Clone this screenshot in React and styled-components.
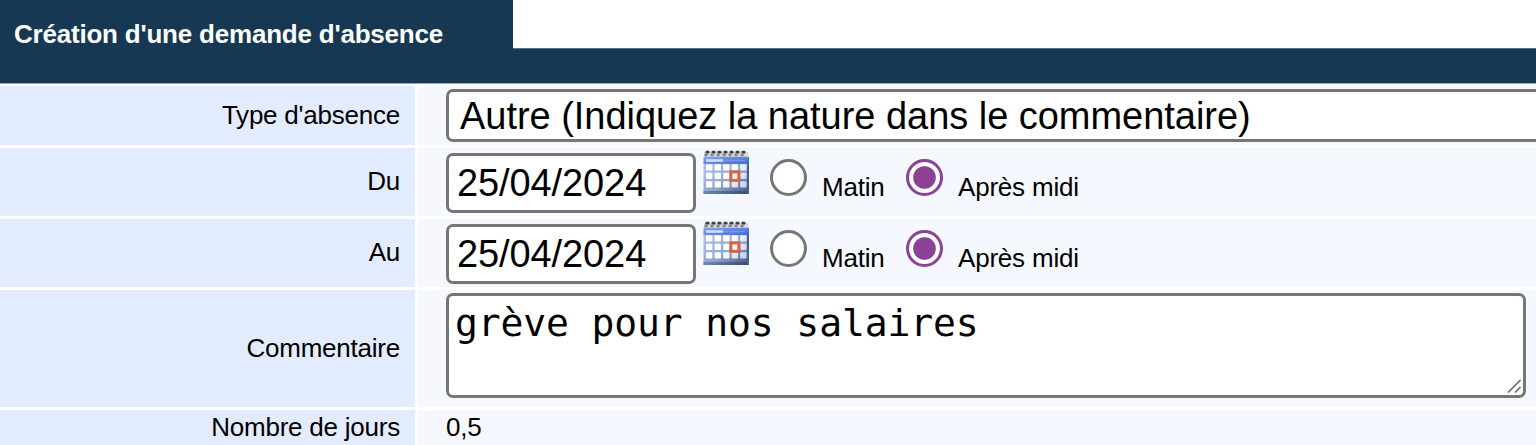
import React, { useState } from "react";
import styled, { createGlobalStyle } from "styled-components";

const GlobalStyle = createGlobalStyle`
    * {
        box-sizing: border-box;
    }

    body {
        margin: 0;
        background-color: #fff;
        color: #000;
        font-family: "Liberation Sans", Arial, sans-serif;
        overflow: hidden;
    }
`;

const Page = styled.main`
    width: 100%;
    height: 445px;
    overflow: hidden;
`;

const Tab = styled.h1`
    width: 513px;
    height: 48px;
    margin: 0;
    padding: 19px 0 0 14px;
    background-color: #163853;
    color: #fff;
    font-size: 26px;
    line-height: 30px;
    letter-spacing: -0.21px;
    white-space: nowrap;
`;

const Bar = styled.div`
    height: 36px;
    margin-bottom: 2px;
    background:
        linear-gradient(#9aaab8, #9aaab8) 0 100% / 100% 1px no-repeat,
        linear-gradient(#577085, #577085) 513px 0 / 100% 1px no-repeat,
        #163853;
`;

const Form = styled.form`
    display: flex;
    flex-direction: column;
    gap: 3px;
`;

const Row = styled.div`
    display: grid;
    grid-template-columns: 415px 1fr;
    column-gap: 3px;
    height: ${(props) => props.height}px;
`;

const Label = styled.label`
    display: flex;
    align-items: center;
    justify-content: flex-end;
    padding: 0 15px 2px 0;
    background-color: #e3ecff;
    font-size: 26px;
    line-height: 30px;
    letter-spacing: -0.23px;
    white-space: nowrap;
`;

const Value = styled.div`
    display: flex;
    align-items: flex-start;
    min-width: 0;
    padding: ${(props) => props.top || 0}px 0 0 28px;
    background-color: #f5f9ff;
    font-size: 26px;
    line-height: 30px;
    letter-spacing: -0.2px;
    overflow: hidden;
`;

const Select = styled.select`
    flex: none;
    width: 1200px;
    height: 53px;
    padding: 0 0 0 11px;
    appearance: none;
    border: 3px solid #767676;
    border-radius: 7px;
    background-color: #fff;
    color: #000;
    font-family: inherit;
    font-size: 38px;
    letter-spacing: -0.03px;
`;

const DateInput = styled.input`
    flex: none;
    width: 250px;
    height: 60px;
    padding: 0 8px;
    border: 3px solid #767676;
    border-radius: 7px;
    background-color: #fff;
    color: #000;
    font-family: inherit;
    font-size: 38px;
    letter-spacing: -0.1px;
    outline: none;
`;

const CalendarSvg = styled.svg`
    flex: none;
    width: 46px;
    height: 44px;
    margin: -3px 21px 0 7px;
`;

const Radio = styled.input`
    flex: none;
    width: 37px;
    height: 37px;
    margin: 6px 15px 0 0;
    appearance: none;
    border: 3px solid #767676;
    border-radius: 50%;
    background-color: #fff;

    &:checked {
        border-color: #8b4294;
        background-image: radial-gradient(circle, #8b4294 10.8px, #fff 11.8px);
        background-origin: border-box;
    }
`;

const RadioText = styled.span`
    width: ${(props) => props.width}px;
    margin-top: 19px;
    white-space: nowrap;
`;

const CommentBox = styled.div`
    display: grid;
    flex: none;
    width: 1080px;
    height: 105px;
    border: 3px solid #767676;
    border-radius: 7px;
    background-color: #fff;
    overflow: hidden;
`;

const Comment = styled.textarea`
    grid-area: 1 / 1;
    width: 100%;
    height: 100%;
    padding: 5px 6px;
    border: 0;
    resize: none;
    outline: none;
    background-color: transparent;
    color: #000;
    font-family: "DejaVu Sans Mono", monospace;
    font-size: 38px;
    line-height: 45px;
    letter-spacing: -0.12px;
    overflow: hidden;
`;

const Grip = styled.svg`
    grid-area: 1 / 1;
    align-self: end;
    justify-self: end;
    width: 18px;
    height: 18px;
`;

const CELLS_X = [3, 11.6, 20.2, 28.7, 37.2];
const CELLS_Y = [14.3, 22.7, 31.3];
const RINGS = [2.5, 8.5, 14.5, 20.5, 26.5, 32.5, 38.5];

const CalendarIcon = () => (
    <CalendarSvg viewBox="0 0 46 44">
        <defs>
            <linearGradient id="head" x1="0" y1="0" x2="1" y2="1">
                <stop offset="0" stopColor="#86a4f0" />
                <stop offset="1" stopColor="#3864d6" />
            </linearGradient>
            <linearGradient id="sheet" x1="0" y1="0" x2="1" y2="1">
                <stop offset="0" stopColor="#b3c5ef" />
                <stop offset="0.55" stopColor="#8fa6d2" />
                <stop offset="1" stopColor="#3c547f" />
            </linearGradient>
            <linearGradient id="cell" gradientUnits="userSpaceOnUse" x1="0" y1="12" x2="46" y2="42">
                <stop offset="0.5" stopColor="#fff" />
                <stop offset="1" stopColor="#b2c6e8" />
            </linearGradient>
            <linearGradient id="edge" x1="0" y1="0" x2="1" y2="0">
                <stop offset="0" stopColor="#7388ae" />
                <stop offset="1" stopColor="#34496e" />
            </linearGradient>
        </defs>
        <rect x="1" y="2" width="44.5" height="5.5" fill="#d5d8dc" />
        <rect x="0.5" y="12" width="45.5" height="32" fill="url(#sheet)" />
        <rect x="0.5" y="6.8" width="45.5" height="7" fill="url(#head)" />
        <rect x="3" y="9.2" width="17" height="2.6" fill="#cfdcfc" />
        <rect x="20" y="9.8" width="22" height="1.6" fill="#7797e8" />
        {RINGS.map((x) => (
            <g key={x}>
                <rect x={x} y="0.8" width="4" height="2.8" rx="1" fill="#3c3e42" />
                <rect x={x - 1} y="3.4" width="3.2" height="2.8" rx="0.8" fill="#83868c" />
            </g>
        ))}
        {CELLS_Y.map((y) =>
            CELLS_X.map((x) => (
                <rect key={`${x}-${y}`} x={x} y={y} width="6.4" height="6.3" rx="0.8" fill="url(#cell)" />
            ))
        )}
        <path d="M0.5 41H46V44H0.5z" fill="url(#edge)" />
        <path d="M44 14H46V44H44z" fill="#49618d" />
        <rect x="27.9" y="21.9" width="8" height="8.4" fill="#fff" stroke="#df6040" strokeWidth="3" />
    </CalendarSvg>
);

const DateRow = ({ label, name }) => {
    const [date, setDate] = useState("25/04/2024");
    const [period, setPeriod] = useState("pm");

    return (
        <Row height={68}>
            <Label htmlFor={name}>{label}</Label>
            <Value top={5}>
                <DateInput id={name} value={date} onChange={(e) => setDate(e.target.value)} />
                <CalendarIcon />
                <Radio
                    type="radio"
                    name={`${name}-period`}
                    checked={period === "am"}
                    onChange={() => setPeriod("am")}
                />
                <RadioText width={84}>Matin</RadioText>
                <Radio
                    type="radio"
                    name={`${name}-period`}
                    checked={period === "pm"}
                    onChange={() => setPeriod("pm")}
                />
                <RadioText width={130}>Après midi</RadioText>
            </Value>
        </Row>
    );
};

const App = () => {
    return (
        <Page>
            <GlobalStyle />
            <Tab>Création d'une demande d'absence</Tab>
            <Bar />
            <Form>
                <Row height={59}>
                    <Label htmlFor="type">Type d'absence</Label>
                    <Value top={3}>
                        <Select id="type">
                            <option>Autre (Indiquez la nature dans le commentaire)</option>
                        </Select>
                    </Value>
                </Row>
                <DateRow label="Du" name="du" />
                <DateRow label="Au" name="au" />
                <Row height={117}>
                    <Label htmlFor="comment">Commentaire</Label>
                    <Value top={3}>
                        <CommentBox>
                            <Comment id="comment" spellCheck={false} defaultValue="grève pour nos salaires" />
                            <Grip viewBox="0 0 18 18" fill="none" stroke="#666" strokeWidth="1.6">
                                <path d="M3 15.5 15.5 3M10 15.5 15.5 10" />
                            </Grip>
                        </CommentBox>
                    </Value>
                </Row>
                <Row height={36}>
                    <Label as="div">Nombre de jours</Label>
                    <Value top={2}>0,5</Value>
                </Row>
            </Form>
        </Page>
    );
};

export default App;
